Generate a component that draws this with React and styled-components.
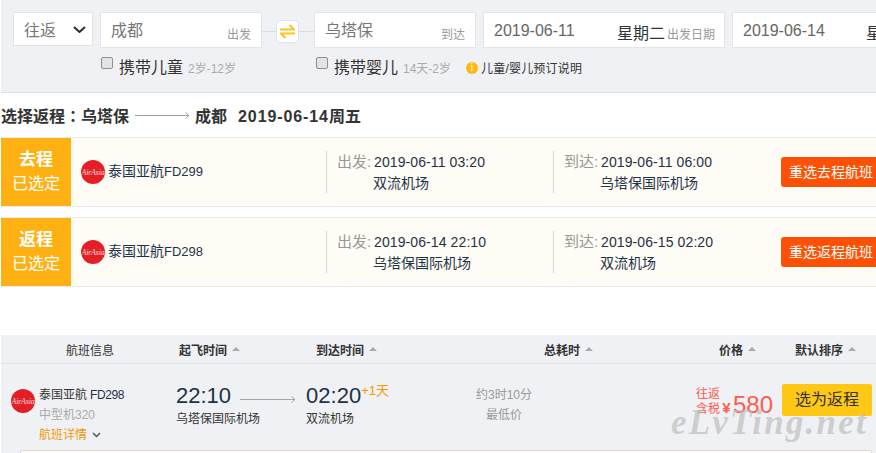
import React from "react";
import styled, { createGlobalStyle } from "styled-components";

const GlobalStyle = createGlobalStyle`
  html, body {
    margin: 0;
    padding: 0;
    background: #fff;
    overflow: hidden;
  }
  body {
    font-family: "Liberation Sans", "Noto Sans CJK SC", sans-serif;
    color: #333;
  }
`;

const SelectedRows = [
  {
    tag: "去程",
    carrier: "泰国亚航",
    code: "FD299",
    departTime: "2019-06-11 03:20",
    departPort: "双流机场",
    arriveTime: "2019-06-11 06:00",
    arrivePort: "乌塔保国际机场",
    action: "重选去程航班",
  },
  {
    tag: "返程",
    carrier: "泰国亚航",
    code: "FD298",
    departTime: "2019-06-14 22:10",
    departPort: "乌塔保国际机场",
    arriveTime: "2019-06-15 02:20",
    arrivePort: "双流机场",
    action: "重选返程航班",
  },
];

const Logo = () => (
  <LogoCircle>
    <LogoText>AirAsia</LogoText>
  </LogoCircle>
);

const Arrow = ({ width }) => (
  <svg width={width} height="7" viewBox={`0 0 ${width} 7`} fill="none" stroke="#a5a5a5">
    <path d={`M0 3.5H${width - 1}M${width - 4.5} 0.5L${width - 1} 3.5L${width - 4.5} 6.5`} />
  </svg>
);

const SortHead = ({ children, bold = true, caret = true, width, pad }) => (
  <HeadCell $width={width} $pad={pad} $bold={bold}>
    {children}
    {caret && <Caret />}
  </HeadCell>
);

export default function App() {
  return (
    <Page>
      <GlobalStyle />
      <SearchPanel>
        <SearchRow>
          <TripSelect>
            往返
            <svg width="13" height="7" viewBox="0 0 13 7" fill="none" stroke="#2b2b3a" strokeWidth="2">
              <path d="M1 1L6.5 6L12 1" />
            </svg>
          </TripSelect>
          <CityBox>
            成都<BoxHint>出发</BoxHint>
          </CityBox>
          <SwapWrap>
            <SwapButton>
              <svg width="15" height="15" viewBox="0 0 15 15" fill="none" stroke="#fcc41f" strokeWidth="2">
                <path d="M0 5.5H14L9.5 1M15 9.5H1L5.5 14" />
              </svg>
            </SwapButton>
          </SwapWrap>
          <CityBox>
            乌塔保<BoxHint>到达</BoxHint>
          </CityBox>
          <DateBox>
            <DateValue>2019-06-11</DateValue>
            <WeekDay>星期二</WeekDay>
            <DateHint>出发日期</DateHint>
          </DateBox>
          <DateBox>
            <DateValue>2019-06-14</DateValue>
            <WeekDay>星期五</WeekDay>
            <DateHint>返回日期</DateHint>
          </DateBox>
        </SearchRow>
        <OptionRow>
          <Option $width={215}>
            <Check />
            携带儿童<OptionNote>2岁-12岁</OptionNote>
          </Option>
          <Option $width={150}>
            <Check />
            携带婴儿<OptionNote>14天-2岁</OptionNote>
          </Option>
          <InfoLink>
            <InfoDot>i</InfoDot>
            儿童/婴儿预订说明
          </InfoLink>
        </OptionRow>
      </SearchPanel>

      <RouteTitle>
        选择返程<RouteColon>：</RouteColon>乌塔保
        <RouteArrow>
          <Arrow width={55} />
        </RouteArrow>
        成都
        <RouteDate>
          <RouteDigits>2019-06-14</RouteDigits>周五
        </RouteDate>
      </RouteTitle>

      <SelectedList>
        {SelectedRows.map((row) => (
          <SelectedRow key={row.tag}>
            <Badge>
              <BadgeTitle>{row.tag}</BadgeTitle>
              <BadgeSub>已选定</BadgeSub>
            </Badge>
            <Carrier>
              <Logo />
              <CarrierName>
                {row.carrier}
                <CarrierCode>{row.code}</CarrierCode>
              </CarrierName>
            </Carrier>
            <Stop>
              <StopLabel>出发:</StopLabel>
              <StopInfo>
                <StopTime>{row.departTime}</StopTime>
                <StopPort>{row.departPort}</StopPort>
              </StopInfo>
            </Stop>
            <Stop>
              <StopLabel>到达:</StopLabel>
              <StopInfo>
                <StopTime>{row.arriveTime}</StopTime>
                <StopPort>{row.arrivePort}</StopPort>
              </StopInfo>
            </Stop>
            <ReselectButton>{row.action}</ReselectButton>
          </SelectedRow>
        ))}
      </SelectedList>

      <ResultTable>
        <TableHead>
          <SortHead width={178} pad={65} bold={false} caret={false}>
            航班信息
          </SortHead>
          <SortHead width={137}>起飞时间</SortHead>
          <SortHead width={228}>到达时间</SortHead>
          <SortHead width={175}>总耗时</SortHead>
          <SortHead width={76}>价格</SortHead>
          <SortHead>默认排序</SortHead>
        </TableHead>
        <FlightRow>
          <FlightInfo>
            <Logo />
            <FlightText>
              <FlightName>
                泰国亚航<FlightCode>FD298</FlightCode>
              </FlightName>
              <PlaneType>中型机320</PlaneType>
              <DetailLink>
                航班详情
                <svg width="9" height="6" viewBox="0 0 9 6" fill="none" stroke="#555" strokeWidth="1.5">
                  <path d="M1 1L4.5 4.5L8 1" />
                </svg>
              </DetailLink>
            </FlightText>
          </FlightInfo>
          <TimeBlock>
            <TimeLine>
              <BigTime>22:10</BigTime>
              <TimeArrow>
                <Arrow width={56} />
              </TimeArrow>
              <BigTime>02:20</BigTime>
              <NextDay>+1天</NextDay>
            </TimeLine>
            <PortLine>
              <PortName $width={130}>乌塔保国际机场</PortName>
              <PortName>双流机场</PortName>
            </PortLine>
          </TimeBlock>
          <Duration>
            <span>约3时10分</span>
            <span>最低价</span>
          </Duration>
          <Price>
            <PriceNote>
              <span>往返</span>
              <span>含税</span>
            </PriceNote>
            <Yen>¥</Yen>
            <Amount>580</Amount>
          </Price>
          <ChooseButton>选为返程</ChooseButton>
        </FlightRow>
        <NextCardEdge />
        <Watermark>eLvTing.net</Watermark>
      </ResultTable>
    </Page>
  );
}

const Page = styled.div`
  position: relative;
  width: 876px;
  height: 453px;
  overflow: hidden;
  padding-left: 1px;
  box-sizing: border-box;
`;

const SearchPanel = styled.div`
  height: 80px;
  background: #eff1f4;
  border-bottom: 1px solid #e0e1e3;
  padding: 12px 0 0 12px;
`;

const SearchRow = styled.div`
  display: flex;
  width: 980px;
  align-items: flex-start;
`;

const TripSelect = styled.div`
  width: 80px;
  height: 34px;
  box-sizing: border-box;
  margin-right: 7px;
  background: #fff;
  border: 1px solid #e3e4e6;
  padding: 0 6px 0 10px;
  display: flex;
  align-items: center;
  justify-content: space-between;
  font-size: 16px;
  color: #777;
`;

const CityBox = styled.div`
  position: relative;
  width: 162px;
  height: 36px;
  box-sizing: border-box;
  background: #fff;
  border: 1px solid #e3e4e6;
  padding: 0 10px;
  line-height: 35px;
  font-size: 16px;
  color: #777;
`;

const BoxHint = styled.span`
  position: absolute;
  right: 10px;
  bottom: 4px;
  line-height: 16px;
  font-size: 12px;
  color: #999;
`;

const SwapWrap = styled.div`
  width: 52px;
  height: 38px;
  display: flex;
  align-items: center;
  justify-content: center;
  background: linear-gradient(#d8dadc, #d8dadc) center / 100% 1px no-repeat;
`;

const SwapButton = styled.div`
  width: 23px;
  height: 23px;
  margin-left: -2px;
  box-sizing: border-box;
  border: 1px solid #e3e4e6;
  border-radius: 5px;
  background: #fff;
  display: flex;
  align-items: center;
  justify-content: center;
`;

const DateBox = styled(CityBox)`
  width: 242px;
  margin-left: 7px;
  color: #666;
`;

const DateValue = styled.span`
  font-size: 16px;
`;

const WeekDay = styled.span`
  position: absolute;
  left: 133px;
  top: 3px;
  font-size: 16px;
  color: #333;
`;

const DateHint = styled(BoxHint)`
  right: 9px;
`;

const OptionRow = styled.div`
  display: flex;
  align-items: center;
  height: 26px;
  margin: 3px 0 0 88px;
`;

const Option = styled.div`
  width: ${(p) => p.$width}px;
  flex: none;
  display: flex;
  align-items: center;
  font-size: 16px;
  color: #333;
`;

const Check = styled.span`
  width: 10px;
  height: 10px;
  margin: -6px 6px 0 0;
  background: #e4e4e4;
  border: 1px solid #8f8f8f;
  border-radius: 2px;
`;

const OptionNote = styled.span`
  margin: 3px 0 0 5px;
  font-size: 12px;
  color: #aaa;
`;

const InfoLink = styled.div`
  display: flex;
  align-items: center;
  margin-top: 3px;
  font-size: 12px;
  letter-spacing: 0.2px;
  color: #333;
`;

const InfoDot = styled.span`
  width: 12px;
  height: 12px;
  margin-right: 3px;
  border-radius: 50%;
  background: #fdb913;
  color: #fff;
  font-size: 10px;
  line-height: 12px;
  text-align: center;
`;

const RouteTitle = styled.div`
  display: flex;
  align-items: center;
  height: 44px;
  font-size: 16px;
  font-weight: 700;
  color: #333;
`;

const RouteColon = styled.span`
  font-family: "Noto Sans CJK TC", sans-serif;
`;

const RouteArrow = styled.span`
  display: flex;
  margin: 0 5px 0 6px;
`;

const RouteDate = styled.span`
  margin-left: 11px;
`;

const RouteDigits = styled.span`
  letter-spacing: 0.9px;
`;

const SelectedList = styled.div`
  display: flex;
  flex-direction: column;
  gap: 10px;
`;

const SelectedRow = styled.div`
  display: flex;
  align-items: stretch;
  height: 68px;
  background: #fffcf6;
  border-top: 1px solid #e7e9f0;
  border-bottom: 1px solid #e7e9f0;
`;

const Badge = styled.div`
  width: 70px;
  flex: none;
  background: #ffb114;
  color: #fff;
  display: flex;
  flex-direction: column;
  align-items: center;
  justify-content: center;
`;

const BadgeTitle = styled.div`
  font-size: 17px;
  font-weight: 700;
  line-height: 24px;
`;

const BadgeSub = styled.div`
  font-size: 16px;
  line-height: 24px;
`;

const Carrier = styled.div`
  width: 255px;
  flex: none;
  display: flex;
  align-items: center;
  gap: 3px;
  padding-left: 10px;
  box-sizing: border-box;
  font-size: 14px;
  color: #1d3346;
`;

const CarrierName = styled.span`
  margin-bottom: 4px;
`;

const CarrierCode = styled.span`
  font-size: 13px;
`;

const LogoCircle = styled.span`
  width: 24px;
  height: 24px;
  flex: none;
  border-radius: 50%;
  background: #e31f26;
  display: flex;
  align-items: center;
  justify-content: center;
  overflow: hidden;
`;

const LogoText = styled.span`
  font-family: "Liberation Serif", serif;
  font-style: italic;
  font-size: 8px;
  letter-spacing: -0.2px;
  color: #fbdcdc;
`;

const Stop = styled.div`
  width: 227px;
  flex: none;
  display: flex;
  align-self: center;
  height: 42px;
  box-sizing: border-box;
  border-left: 1px solid #d5d5d5;
  padding-left: 10px;
  font-size: 14px;
`;

const StopLabel = styled.span`
  width: 37px;
  flex: none;
  font-size: 15px;
  color: #999;
  line-height: 22px;
`;

const StopInfo = styled.div`
  line-height: 22px;
  color: #1d3346;
`;

const StopTime = styled.div`
  font-size: 14px;
  letter-spacing: 0.1px;
`;

const StopPort = styled.div`
  margin: -1px 0 0 -1px;
`;

const ReselectButton = styled.div`
  align-self: center;
  flex: none;
  width: 100px;
  height: 30px;
  margin-left: 1px;
  border-radius: 3px;
  background: #fe5105;
  color: #fff;
  font-size: 14px;
  line-height: 30px;
  padding-left: 8px;
  box-sizing: border-box;
`;

const ResultTable = styled.div`
  position: relative;
  margin-top: 48px;
  height: 200px;
  background: #eff1f4;
`;

const TableHead = styled.div`
  display: flex;
  align-items: center;
  height: 28px;
  border-bottom: 1px solid #dfe0e2;
  font-size: 12px;
`;

const HeadCell = styled.div`
  ${(p) => p.$width && `width: ${p.$width}px;`}
  flex: none;
  box-sizing: border-box;
  display: flex;
  align-items: center;
  padding-left: ${(p) => p.$pad || 0}px;
  font-weight: ${(p) => (p.$bold ? 700 : 400)};
  color: #333;
`;

const Caret = styled.span`
  width: 0;
  height: 0;
  margin-left: 5px;
  border-left: 4px solid transparent;
  border-right: 4px solid transparent;
  border-bottom: 4px solid #aaa;
`;

const FlightRow = styled.div`
  display: flex;
  align-items: flex-start;
  height: 86px;
`;

const FlightInfo = styled.div`
  width: 175px;
  flex: none;
  display: flex;
  align-items: flex-start;
  gap: 4px;
  padding: 21px 0 0 10px;
  box-sizing: border-box;

  ${LogoCircle} {
    margin-top: 4px;
  }
`;

const FlightText = styled.div`
  display: flex;
  flex-direction: column;
  font-size: 12px;
  line-height: 20px;
`;

const FlightName = styled.div`
  color: #333;
`;

const FlightCode = styled.span`
  margin-left: 3px;
  letter-spacing: -0.4px;
  color: #1d3346;
`;

const PlaneType = styled.div`
  color: #aaa;
`;

const DetailLink = styled.div`
  display: flex;
  align-items: center;
  gap: 5px;
  color: #f39800;
`;

const TimeBlock = styled.div`
  width: 267px;
  flex: none;
  padding-top: 19px;
`;

const TimeLine = styled.div`
  display: flex;
  align-items: flex-start;
  height: 26px;
`;

const BigTime = styled.span`
  font-size: 22px;
  line-height: 26px;
  color: #1d3346;
`;

const TimeArrow = styled.span`
  display: flex;
  margin: 13px 10px 0 9px;
`;

const NextDay = styled.span`
  font-size: 13px;
  line-height: 16px;
  color: #f39800;
`;

const PortLine = styled.div`
  display: flex;
  font-size: 12px;
  line-height: 20px;
  color: #333;
`;

const PortName = styled.span`
  ${(p) => p.$width && `width: ${p.$width}px;`}
`;

const Duration = styled.div`
  width: 130px;
  flex: none;
  display: flex;
  flex-direction: column;
  align-items: center;
  padding-top: 21px;
  margin-left: -4px;
  font-size: 12px;
  line-height: 20px;
  color: #999;
`;

const Price = styled.div`
  width: 86px;
  flex: none;
  display: flex;
  align-items: flex-end;
  margin: 23px 0 0 127px;
  color: #fe5a4e;
`;

const PriceNote = styled.div`
  display: flex;
  flex-direction: column;
  font-size: 12px;
  line-height: 15px;
`;

const Yen = styled.span`
  width: 13px;
  font-size: 15px;
  font-weight: 700;
  line-height: 18px;
  text-align: center;
`;

const Amount = styled.span`
  font-size: 24px;
  line-height: 24px;
`;

const ChooseButton = styled.div`
  flex: none;
  width: 90px;
  height: 32px;
  margin-top: 20px;
  border-radius: 2px;
  background: #ffc815;
  color: #333;
  font-size: 16px;
  line-height: 32px;
  text-align: center;
`;

const NextCardEdge = styled.div`
  margin-left: 19px;
  width: 852px;
  height: 20px;
  box-sizing: border-box;
  background: #fffcf6;
  border: 1px solid #d9d9d9;
  border-radius: 2px;
`;

const Watermark = styled.div`
  position: absolute;
  left: 670px;
  top: 68px;
  font-family: "Liberation Serif", serif;
  font-style: italic;
  font-weight: 700;
  font-size: 35px;
  letter-spacing: 2.2px;
  line-height: 40px;
  color: rgba(190, 190, 190, 0.7);
  white-space: nowrap;
`;
